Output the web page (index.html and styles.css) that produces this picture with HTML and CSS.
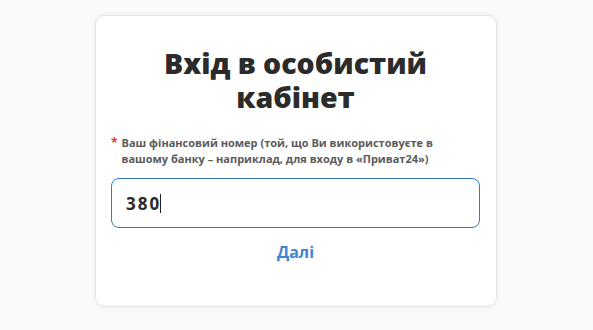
FILE: index.html
```html
<!DOCTYPE html>
<html lang="uk">
<head>
<meta charset="UTF-8">
<meta name="viewport" content="width=device-width, initial-scale=1.0">
<title>Вхід в особистий кабінет</title>
<link rel="stylesheet" href="styles.css">
</head>
<body>
<div class="page">
    <div class="login-card">
        <h1 class="title">Вхід в особистий кабінет</h1>
        <label class="field-label" for="phone">
            <span class="required">*</span>
            <span>Ваш фінансовий номер (той, що Ви використовуєте в вашому банку – наприклад, для входу в «Приват24»)</span>
        </label>
        <div class="field">
            <span class="field-value">380</span><span class="caret"></span>
        </div>
        <div class="actions">
            <a class="next-link" href="#">Далі</a>
        </div>
    </div>
</div>
</body>
</html>
```

FILE: styles.css
```css
body {
    margin: 0;
    font-family: "Open Sans", Arial, sans-serif;
    background-color: #fafafa;
}

.page {
    display: flex;
    justify-content: center;
    padding-top: 15px;
    padding-right: 1px;
    height: 330px;
    box-sizing: border-box;
}

.login-card {
    width: 402px;
    height: 292px;
    box-sizing: border-box;
    background-color: #fff;
    border: 1px solid #e6e6e6;
    border-radius: 10px;
    box-shadow: 0 0 4px rgba(0, 0, 0, 0.08);
    padding: 30px 16px 0 15px;
}

.title {
    margin: 0 0 21px 0;
    text-align: center;
    font-size: 28.5px;
    line-height: 34px;
    font-weight: 800;
    color: #2b2b2b;
    padding: 0 40px;
}

.field-label {
    display: flex;
    gap: 4px;
    font-size: 11px;
    line-height: 16px;
    font-weight: 700;
    color: #5a5a5a;
    padding-right: 2px;
}

.required {
    color: #e53935;
    font-size: 12px;
}

.field {
    margin-top: 11px;
    height: 50px;
    box-sizing: border-box;
    border: 1px solid #3a78c2;
    border-radius: 8px;
    display: flex;
    align-items: center;
    padding-left: 14px;
}

.field-value {
    font-size: 17px;
    font-weight: 700;
    letter-spacing: 2px;
    color: #2b2b2b;
}

.caret {
    display: inline-block;
    width: 1px;
    height: 19px;
    background-color: #222;
    margin-left: -1px;
}

.actions {
    display: flex;
    justify-content: center;
    margin-top: 13px;
}

.next-link {
    font-size: 16px;
    font-weight: 700;
    color: #3d86d6;
    text-decoration: none;
}
```
